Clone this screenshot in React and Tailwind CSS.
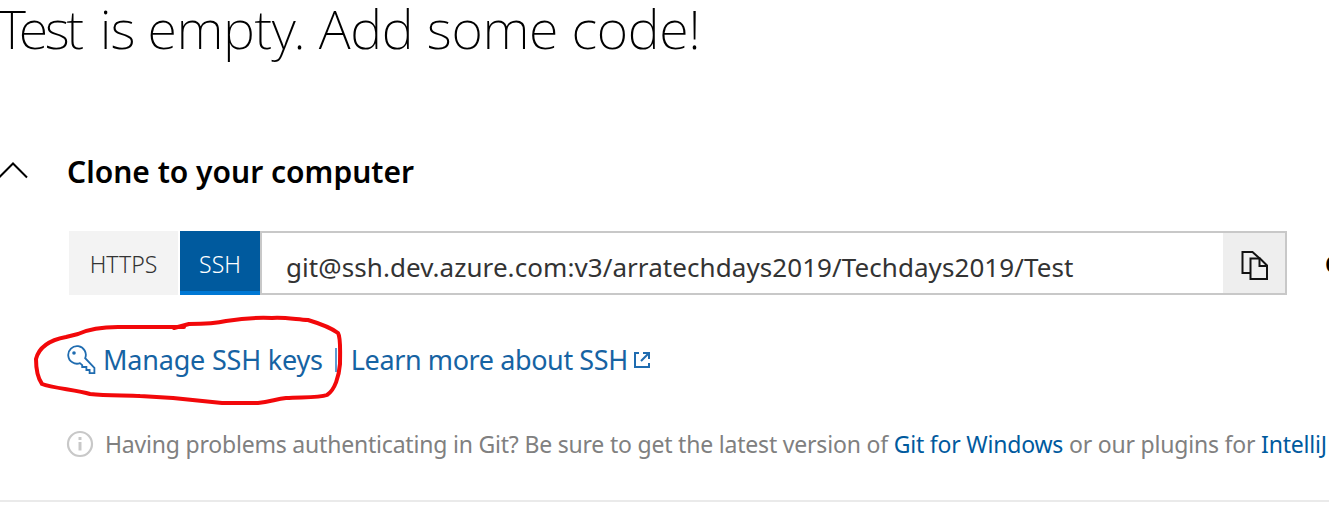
function ChevronUp() {
  return (
    <svg className="h-[20px] w-[30px] shrink-0" viewBox="0 0 30 20" fill="none" stroke="#000" strokeWidth="2">
      <path d="M-1 16.5 L13 2.5 L27 16.5" />
    </svg>
  );
}

function CopyIcon() {
  return (
    <svg className="h-[30px] w-[28px]" viewBox="0 0 28 30" fill="none" stroke="#111" strokeWidth="2">
      <path d="M9 22 H1.5 V1 H11.5 L19 7.8" />
      <path d="M9.5 7.5 H19 L26 14.5 V28 H9.5 Z" />
      <path d="M18.5 7.5 V15 H26" />
    </svg>
  );
}

function KeyIcon() {
  return (
    <svg className="h-[30px] w-[30px] shrink-0" viewBox="0 0 30 30" fill="none" stroke="#1f6cb0" strokeWidth="1.8">
      <path d="M18.2 13.2 A8.8 8.8 0 1 0 13 18.2 L15.2 20.2 V22 H19.4 V25 H22.6 V28.2 H27.4 V22.8 Z" />
      <circle cx="7" cy="8" r="1.8" fill="#1f6cb0" stroke="none" />
    </svg>
  );
}

function ExternalIcon() {
  return (
    <svg className="h-[18px] w-[18px] shrink-0" viewBox="0 0 18 18" fill="none" stroke="#1f6cb0" strokeWidth="2">
      <path d="M6 2 H2 V16 H16 V12" />
      <path d="M8 10 L16 2 M10 2 H16 V8" />
    </svg>
  );
}

function InfoIcon() {
  return (
    <svg className="h-[28px] w-[28px] shrink-0" viewBox="0 0 28 28" fill="none" stroke="#c8c8c8" strokeWidth="2.2">
      <circle cx="14" cy="14" r="12" />
      <path d="M14 12 V20.5" strokeWidth="3" />
      <path d="M14 7 V10" strokeWidth="3" />
    </svg>
  );
}

export default function App() {
  return (
    <div className="relative flex h-[514px] w-[1329px] flex-col overflow-hidden bg-white font-['Noto_Sans','Open_Sans',sans-serif] whitespace-nowrap text-black">
      <h1 className="-ml-[2px] h-[150px] text-[54px] leading-[56px] font-extralight tracking-[-0.4px]">
        <span className="mr-[8px] tracking-[-3.3px]">Test </span>
        <span className="tracking-[-1px]">is </span>empty. Add some code!
      </h1>

      <div className="flex h-[41px] items-center">
        <ChevronUp />
        <h2 className="mt-[2px] ml-[37px] text-[30px] leading-[41px] font-semibold">Clone to your computer</h2>
      </div>

      <div className="mt-[40px] ml-[69px] flex h-[64px] w-[1400px]">
        <button className="mr-[2px] w-[109px] bg-[#f3f3f3] pt-[2px] text-[23px] font-light text-[#333]">HTTPS</button>
        <button className="w-[80px] border-t-4 border-b-4 border-t-[#005a9e] border-b-[#0078d4] bg-[#005a9e] pt-[2px] text-[23px] font-light text-white">SSH</button>
        <div className="flex w-[1027px] border-2 border-[#c8c8c8]">
          <span className="flex-1 pt-[4px] pl-[24px] text-[26px] leading-[60px] tracking-[0.07px] text-[#333]">git@ssh.dev.azure.com:v3/arratechdays2019/Techdays2019/Test</span>
          <button className="flex w-[62px] items-center justify-center bg-[#eee] pt-[6px] pl-[1px]">
            <CopyIcon />
          </button>
        </div>
        <span className="ml-[38px] text-[24px] leading-[66px] font-bold">OR</span>
      </div>

      <div className="mt-[45px] flex h-[40px] items-center pl-[67px] text-[27px] text-[#1663a3]">
        <KeyIcon />
        <a className="ml-[6px] tracking-[-0.2px]">Manage SSH keys</a>
        <span className="mr-[14px] ml-[12px] h-[24px] w-[2px] shrink-0 bg-[#5d9bd3]" />
        <a className="tracking-[-0.4px]">Learn more about SSH</a>
        <span className="ml-[5px]">
          <ExternalIcon />
        </span>
      </div>

      <div className="mt-[44px] flex h-[40px] w-[1400px] items-center pl-[66px] text-[23px] text-[#808080]">
        <InfoIcon />
        <p className="ml-[11px] tracking-[-0.2px]">
          Having problems authenticating in Git? Be sure to get the latest version of <a className="text-[#005a9e]">Git for Windows</a> or our plugins for <a className="text-[#005a9e]">IntelliJ</a>
        </p>
      </div>

      <hr className="mt-[36px] border-t-2 border-[#eaeaea]" />

      <svg className="pointer-events-none absolute top-[310px] left-[30px]" width="320" height="100" viewBox="30 310 320 100" fill="none" stroke="#f2080a" strokeWidth="4" strokeLinecap="round" strokeLinejoin="round">
        <path d="M184 327 H118 C100 327 89 329 78 334 L66 337 C50 340 39 347 36 359 C36 367 37 377 42 384 C52 388 77 390 90 394 C107 396 128 395 140 396 L173 398 L222 403 L258 403 C270 402 276 399 286 398 C302 397 319 398 327 395 C335 390 339 376 340 364 C340 351 341 338 338 333 C330 327 318 323 308 320 C294 319 282 317 272 318 C255 317 239 319 226 321 C214 324 202 324 189 324 L174 328" />
      </svg>
    </div>
  );
}
